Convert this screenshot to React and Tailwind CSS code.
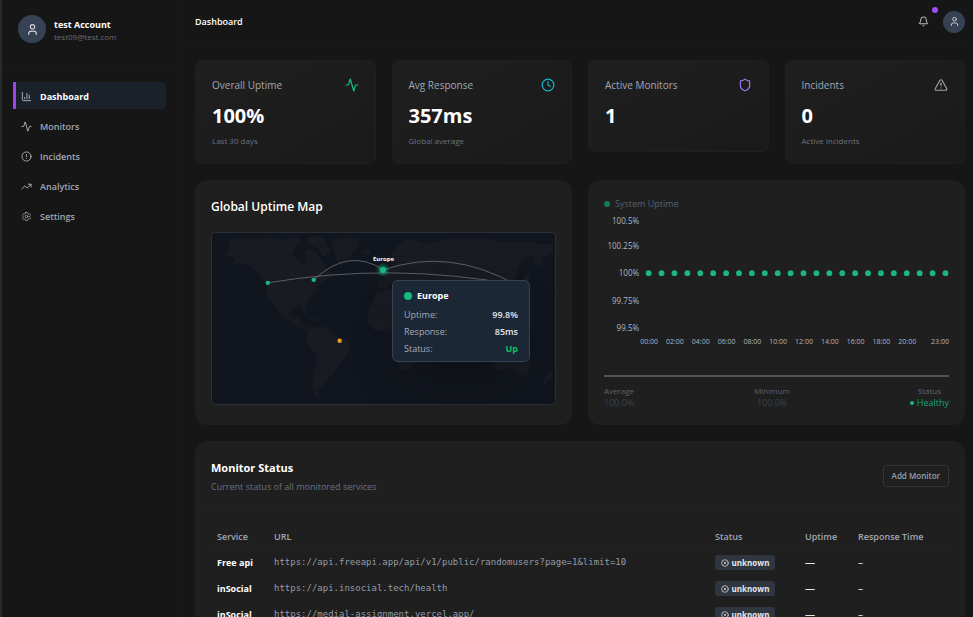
import React from "react";
import {
  Activity,
  Bell,
  ChartColumn,
  CircleAlert,
  CircleX,
  Clock,
  Shield,
  TrendingUp,
  TriangleAlert,
} from "lucide-react";
import { HiOutlineCog6Tooth } from "react-icons/hi2";

const NAV = [
  { label: "Dashboard", icon: ChartColumn, active: true },
  { label: "Monitors", icon: Activity },
  { label: "Incidents", icon: CircleAlert },
  { label: "Analytics", icon: TrendingUp },
  { label: "Settings", icon: HiOutlineCog6Tooth },
];

const STATS = [
  { label: "Overall Uptime", value: "100%", note: "Last 30 days", icon: Activity, color: "text-[#10c48a]" },
  { label: "Avg Response", value: "357ms", note: "Global average", icon: Clock, color: "text-[#16b8cf]" },
  { label: "Active Monitors", value: "1", icon: Shield, color: "text-[#9b7bf0]" },
  { label: "Incidents", value: "0", note: "Active incidents", icon: TriangleAlert, color: "text-[#a1a1aa]" },
];

const MONITORS = [
  { name: "Free api", url: "https://api.freeapi.app/api/v1/public/randomusers?page=1&limit=10" },
  { name: "inSocial", url: "https://api.insocial.tech/health" },
  { name: "inSocial", url: "https://medial-assignment.vercel.app/" },
];

const LAND = [
  "M16 6 L28 4 L44 6 L58 4 L72 7 L84 3 L90 9 L84 14 L80 22 L88 28 L92 34 L95 26 L93 18 L100 16 L108 24 L114 34 L121 43 L113 48 L105 53 L104 58 L98 66 L94 72 L95 80 L91 79 L88 73 L80 74 L78 82 L83 86 L87 83 L88 88 L92 93 L99 96 L97 98 L89 95 L80 89 L70 84 L66 77 L56 65 L54 52 L49 42 L39 33 L30 30 L19 32 L23 26 L14 22 L18 15 Z",
  "M94 4 L112 3 L114 11 L120 19 L112 24 L106 15 L98 11 Z",
  "M119 7 L132 4 L148 5 L146 14 L138 23 L129 32 L124 25 L122 15 Z",
  "M150 18 L158 16 L160 21 L153 23 Z",
  "M94 85 L102 85 L107 88 L101 88 Z",
  "M99 94 L112 94 L122 100 L126 105 L139 109 L136 122 L127 132 L122 141 L115 148 L110 155 L106 158 L109 166 L103 164 L101 155 L101 142 L104 132 L105 122 L98 114 L94 106 Z",
  "M165 59 L178 56 L190 62 L204 64 L209 78 L217 88 L222 88 L211 104 L210 120 L199 136 L189 137 L184 122 L184 108 L178 98 L163 98 L156 88 L157 78 Z",
  "M166 55 L167 48 L174 48 L172 42 L180 37 L182 29 L178 24 L187 12 L196 5 L205 8 L214 11 L226 9 L236 5 L254 6 L270 4 L290 9 L314 9 L342 12 L342 20 L332 24 L328 34 L323 30 L325 24 L314 25 L308 34 L304 46 L296 53 L290 66 L279 73 L278 85 L270 76 L264 71 L254 82 L252 91 L247 76 L238 68 L226 66 L229 75 L218 84 L208 69 L199 59 L188 58 L181 50 L174 55 Z",
  "M167 33 L172 31 L176 42 L168 43 Z",
  "M313 44 L318 38 L319 48 L310 55 Z",
  "M265 91 L278 98 L292 100 L308 101 L319 107 L306 110 L278 105 L267 98 Z",
  "M281 123 L294 115 L304 114 L309 119 L313 113 L320 128 L317 141 L308 144 L300 135 L288 138 L282 135 Z",
  "M338 139 L342 143 L334 153 L331 150 Z",
  "M218 111 L223 110 L220 125 L216 123 Z",
];

const HOURS = Array.from({ length: 24 }, (_, i) => i);

function UserIcon({ size }) {
  return (
    <svg
      width={size}
      height={size}
      viewBox="0 0 24 24"
      fill="none"
      stroke="currentColor"
      strokeWidth="2"
      strokeLinecap="round"
      strokeLinejoin="round"
      aria-hidden="true"
    >
      <circle cx="12" cy="7" r="4" />
      <path d="M5 21v-1a5 5 0 0 1 5-5h4a5 5 0 0 1 5 5v1" />
    </svg>
  );
}

function Avatar({ size, iconSize }) {
  return (
    <span className={`flex shrink-0 items-center justify-center rounded-full bg-[#364254] text-gray-300 ${size}`}>
      <UserIcon size={iconSize} />
    </span>
  );
}

function Sidebar() {
  return (
    <aside className="w-[179px] shrink-0 border-l-2 border-[#2b2b2b] border-r border-r-[#1a1a1a]">
      <div className="flex h-[72px] items-start gap-2 border-b border-[#191919] pt-[15px] pl-4">
        <Avatar size="size-7" iconSize={13} />
        <div className="pt-1">
          <p className="text-[9px] leading-3 font-bold text-white">test Account</p>
          <p className="text-[8px] leading-3 text-[#666b77]">test09@test.com</p>
        </div>
      </div>
      <nav className="flex flex-col gap-[3px] pt-[10px] pr-3 pl-[11px]">
        {NAV.map(({ label, icon: Icon, active }) => (
          <a
            key={label}
            href="#"
            className={`flex h-[27px] items-center gap-2 rounded-r border-l-[3px] pt-[2px] pl-[5px] text-[9px] ${
              active ? "border-[#9a45ee] bg-[#1b212b] font-bold text-white" : "border-transparent font-semibold text-[#a0a8b4]"
            }`}
          >
            <Icon className="size-[11px] text-[#b0b4bb]" />
            {label}
          </a>
        ))}
      </nav>
    </aside>
  );
}

function Header() {
  return (
    <header className="flex h-11 items-center justify-between border-b border-[#191919] pr-2 pl-4">
      <h1 className="text-[9px] font-semibold text-white">Dashboard</h1>
      <div className="flex items-center gap-[14px]">
        <button type="button" aria-label="Notifications" className="relative text-gray-300">
          <Bell size={11} />
          <span className="absolute -top-[9px] -right-[9px] size-[6px] rounded-full bg-[#a24bf5]" />
        </button>
        <button type="button" aria-label="Account">
          <Avatar size="size-[22px]" iconSize={11} />
        </button>
      </div>
    </header>
  );
}

function StatCard({ label, value, note, icon: Icon, color }) {
  return (
    <section className="rounded-lg border border-[#202020] bg-linear-to-br from-[#1f1f1f] to-[#1a1a1a] px-4 pt-4 pb-4">
      <div className="flex h-4 items-center justify-between">
        <h2 className="text-[10px] leading-[14px] font-medium text-[#a0a8b4]">{label}</h2>
        <Icon size={14} className={color} />
      </div>
      <p className="mt-2 text-xl leading-[30px] font-bold text-white">{value}</p>
      {note ? <p className="mt-1 text-[8px] leading-3 font-medium text-[#6b7280]">{note}</p> : <div className="h-1" />}
    </section>
  );
}

function UptimeMap() {
  return (
    <section className="rounded-xl bg-[#1f1f1f] px-4 pt-[18px] pb-5">
      <h2 className="text-xs leading-[18px] font-semibold text-white">Global Uptime Map</h2>
      <div className="relative mt-4 rounded border border-[#2a2f37] bg-[#11151d]">
        <svg viewBox="0 0 344 171" className="block w-full" role="img" aria-label="World map of monitor regions">
          <defs>
            <pattern id="dots" width="3" height="3" patternUnits="userSpaceOnUse">
              <rect width="3" height="3" fill="#161a20" />
              <rect width="2" height="2" fill="#1a1d24" />
            </pattern>
          </defs>
          {LAND.map((d) => (
            <path key={d} d={d} fill="url(#dots)" stroke="#15191f" strokeWidth="1" strokeLinejoin="round" />
          ))}
          <g fill="none" stroke="#62666b" strokeWidth="0.9">
            <path d="M102 47 Q137 14 172 37" />
            <path d="M172 37 Q238 14 305 52" />
            <path d="M56 50 Q180 29 305 52" />
          </g>
          <circle cx="171.500" cy="37" r="6.500" fill="#10b981" opacity="0.2" />
          <circle cx="171.500" cy="37" r="4.500" fill="#10b981" opacity="0.3" />
          <circle cx="171.500" cy="37" r="3" fill="#18b986" />
          <circle cx="56" cy="50" r="2.200" fill="#18b986" />
          <circle cx="102" cy="47" r="2.200" fill="#18b986" />
          <circle cx="128" cy="108" r="2.200" fill="#e8a01c" />
          <text x="172" y="28" textAnchor="middle" fontSize="6" fontWeight="700" fill="#ffffff">
            Europe
          </text>
        </svg>
        <div className="absolute top-[47px] left-[180px] w-[138px] rounded-md border border-[#374151] bg-[#1c2736] px-[11px] pt-[6px] pb-1 text-[9px] leading-[17px] text-[#a3abb8] shadow-2xl">
          <h3 className="mb-px flex items-center gap-[5px] text-[9px] leading-[18px] font-bold text-white">
            <span className="size-2 rounded-full bg-[#14bb84]" />
            Europe
          </h3>
          <dl className="grid grid-cols-2">
            <dt>Uptime:</dt>
            <dd className="text-right font-semibold text-gray-200">99.8%</dd>
            <dt>Response:</dt>
            <dd className="text-right font-semibold text-gray-200">85ms</dd>
            <dt>Status:</dt>
            <dd className="text-right font-bold text-[#0fc05f]">Up</dd>
          </dl>
        </div>
      </div>
    </section>
  );
}

function UptimeChart() {
  const yTicks = [
    ["100.5%", 8],
    ["100.25%", 33],
    ["100%", 60],
    ["99.75%", 88],
    ["99.5%", 115],
  ];
  return (
    <section className="flex flex-col rounded-xl bg-[#1f1f1f] px-4 pt-4 pb-4">
      <h2 className="flex h-4 items-center gap-[5px] text-[9px] font-medium text-[#566070]">
        <span className="size-[6px] rounded-full bg-[#177a59]" />
        System Uptime
      </h2>
      <svg viewBox="0 0 344 138" className="mt-px block w-full" role="img" aria-label="System uptime, last 24 hours">
        <g fontSize="8" fill="#b0b6c0">
          {yTicks.map(([label, y]) => (
            <text key={label} x="35" y={y + 3} textAnchor="end">
              {label}
            </text>
          ))}
          {HOURS.filter((h) => h % 2 === 0 && h < 22).map((h) => (
            <text key={h} x={45 + h * 12.87} y="131" textAnchor="middle" fontSize="7" fontWeight="500">
              {`${String(h).padStart(2, "0")}:00`}
            </text>
          ))}
          <text x="344" y="131" textAnchor="end" fontSize="7" fontWeight="500">
            23:00
          </text>
        </g>
        {HOURS.map((h) => (
          <circle key={h} cx={44.5 + h * 12.87} cy="60" r="2.900" fill="#1cb583" />
        ))}
      </svg>
      <div className="mt-auto flex justify-between border-t-2 border-[#545454] pt-2 text-[8px] leading-3 text-[#5b6370]">
        <div>
          <p>Average</p>
          <p className="text-[9px] text-[#39414f]">100.0%</p>
        </div>
        <div className="text-center">
          <p>Minimum</p>
          <p className="text-[9px] text-[#39414f]">100.0%</p>
        </div>
        <div className="text-center">
          <p>Status</p>
          <p className="flex items-center gap-[3px] text-[9px] font-medium text-[#14a474]">
            <span className="size-1 rounded-full bg-[#18b986]" />
            Healthy
          </p>
        </div>
      </div>
    </section>
  );
}

function MonitorTable() {
  return (
    <section className="rounded-xl bg-[#1f1f1f]">
      <div className="flex items-center justify-between border-b border-[#222222] px-4 pt-4 pb-4">
        <div>
          <h2 className="text-[11px] leading-[22px] font-bold text-white">Monitor Status</h2>
          <p className="text-[9px] leading-4 text-[#6b7280]">Current status of all monitored services</p>
        </div>
        <button
          type="button"
          className="h-[22px] rounded-[3px] border border-[#2f353e] px-2 text-[8px] font-semibold text-[#98a0ac]"
        >
          Add Monitor
        </button>
      </div>
      <div className="px-4 pt-3 pb-4">
        <table className="w-full text-left text-[10px]">
          <thead>
            <tr className="h-[26px] border-b border-[#222222] text-[9px] text-[#a0a8b4]">
              <th className="w-[57px] pl-[6px] font-semibold">Service</th>
              <th className="pl-[6px] font-semibold">URL</th>
              <th className="w-[90px] pl-[6px] font-semibold">Status</th>
              <th className="w-[53px] pl-[6px] font-semibold">Uptime</th>
              <th className="w-[97px] pl-[6px] font-semibold">Response Time</th>
            </tr>
          </thead>
          <tbody>
            {MONITORS.map((m) => (
              <tr key={m.url} className="h-[26px] text-gray-200">
                <td className="pl-[6px] text-[9px] font-bold text-white">{m.name}</td>
                <td className="pl-[6px] font-['DejaVu_Sans_Mono',monospace] text-[9px] text-[#949ca8]">{m.url}</td>
                <td className="pl-[6px]">
                  <span className="flex h-[15px] w-[60px] items-center justify-center gap-[3px] rounded-[3px] bg-[#2f3640] text-[8px] font-bold text-gray-200">
                    <CircleX size={8} />
                    unknown
                  </span>
                </td>
                <td className="pl-[6px]">—</td>
                <td className="pl-[6px]">–</td>
              </tr>
            ))}
          </tbody>
        </table>
      </div>
    </section>
  );
}

export default function App() {
  return (
    <div className="flex h-screen overflow-hidden bg-[#161616] font-['Open_Sans','Noto_Sans',sans-serif]">
      <Sidebar />
      <div className="min-w-0 flex-1">
        <Header />
        <main className="flex flex-col gap-4 pt-4 pr-2 pl-4">
          <div className="grid grid-cols-4 items-start gap-4">
            {STATS.map((s) => (
              <StatCard key={s.label} {...s} />
            ))}
          </div>
          <div className="grid grid-cols-2 gap-4">
            <UptimeMap />
            <UptimeChart />
          </div>
          <MonitorTable />
        </main>
      </div>
    </div>
  );
}
